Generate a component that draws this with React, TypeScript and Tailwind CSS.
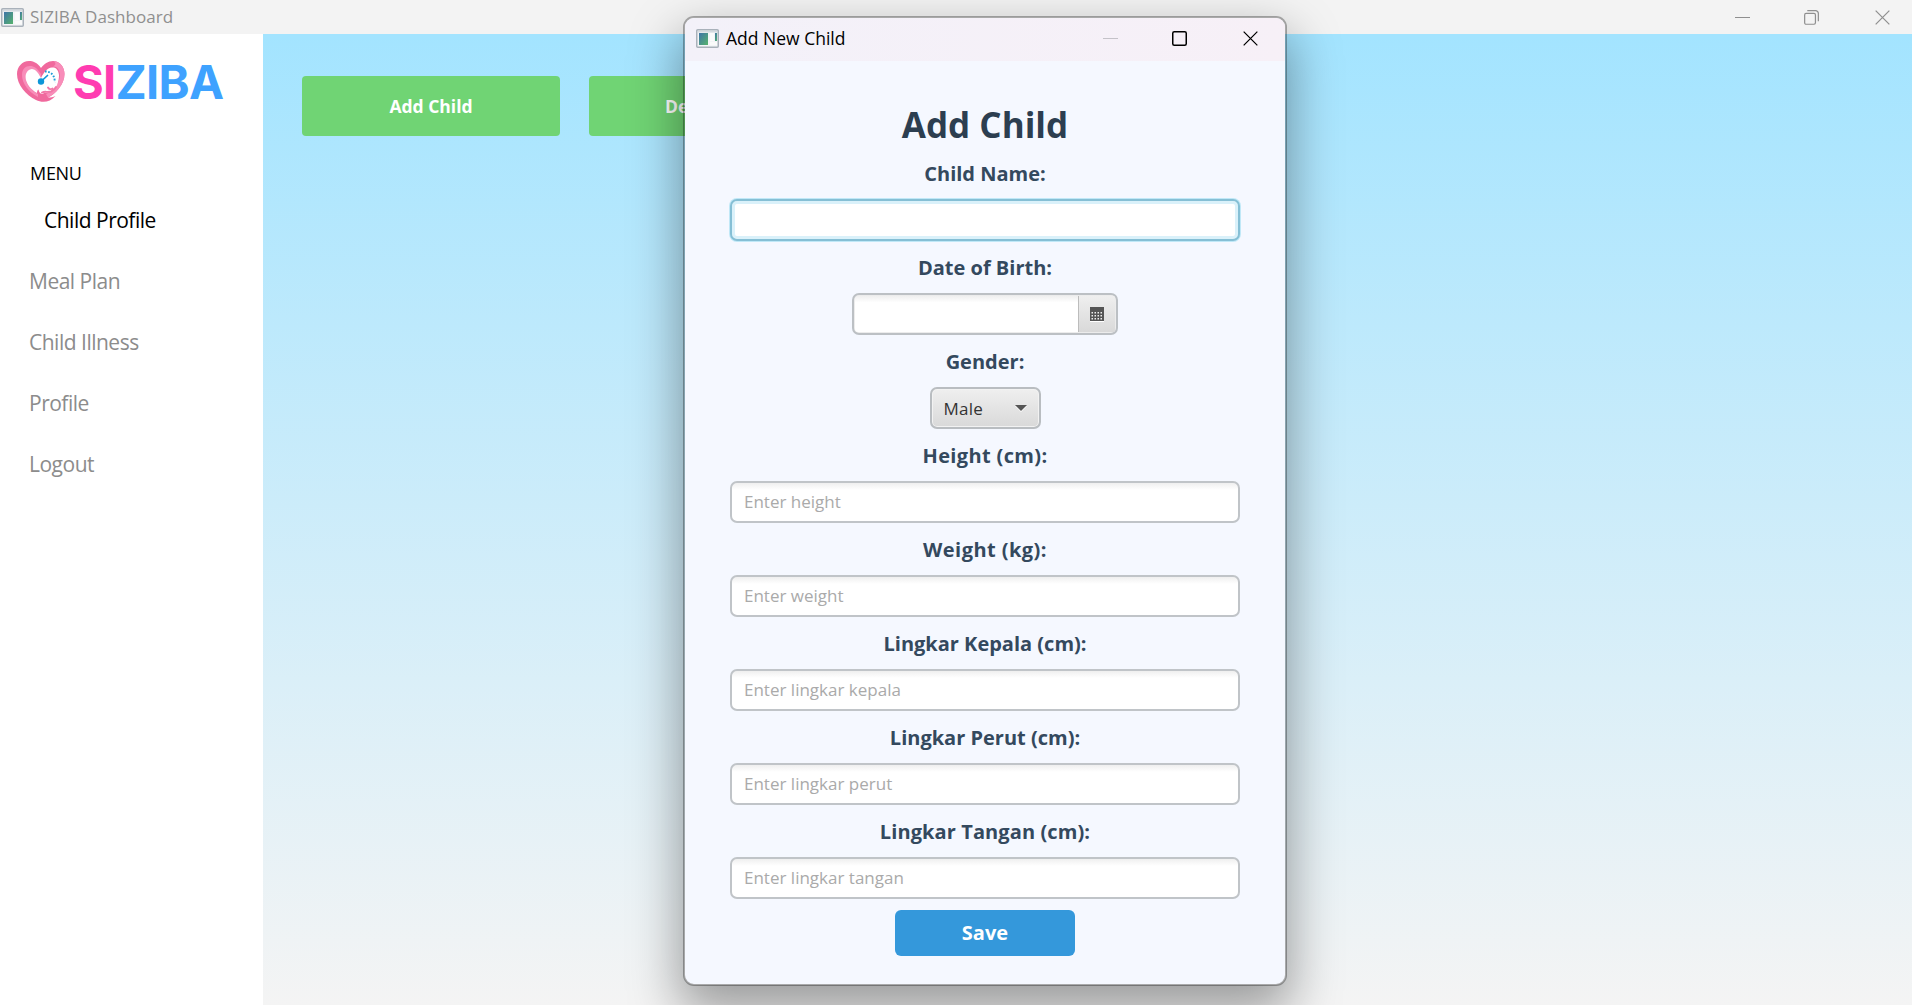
import React from "react";

const FONT = "font-['Open_Sans','Noto_Sans',sans-serif]";

function AppIcon({ className = "" }: { className?: string }) {
  return (
    <svg className={className} viewBox="0 0 23 19" fill="none">
      <defs>
        <linearGradient id="pane" x1="0" y1="0" x2="1" y2="1">
          <stop offset="0" stopColor="#3f74a8" />
          <stop offset="1" stopColor="#56b36c" />
        </linearGradient>
      </defs>
      <rect x="0.75" y="0.75" width="21.5" height="17.5" rx="1" fill="#f3f5f7" stroke="#a9b1ba" strokeWidth="1.5" />
      <rect x="2" y="2" width="19" height="1.5" fill="#d5dae0" />
      <rect x="3" y="4" width="9" height="12" fill="url(#pane)" />
      <rect x="14" y="4" width="4" height="8" fill="#fbfbfb" />
      <rect x="19" y="4" width="2" height="8" fill="url(#pane)" />
      <rect x="14" y="13" width="7" height="3" fill="#fafafa" />
    </svg>
  );
}

function HeartLogo() {
  return (
    <svg className="h-[42px] w-[48px]" viewBox="0 0 48 42" fill="none">
      <path
        d="M24 7 C20 1.500 16 0 12 0 C5 0 0 6 0 13 C0 24 9 34 19 39 C25 42 33 41.500 38.500 35 C36 36 34 36.500 31 36.500 C38 33 47.500 24 47.500 13 C47.500 6 43 0 36 0 C31 0 27 3 24 7 Z"
        fill="#f0699d"
      />
      <path
        d="M5 14 C5 8 8.500 5 13 5 C17 5 20 7 24 13 L24 17 C21 11 18 8 15 8 C11 8 8.500 12 8.500 16 C8.500 23 14 29 21 33 L21 36 C12 31 5 23 5 14 Z"
        fill="#f88db9"
      />
      <path d="M37 0.200 C43 0.500 47.500 6 47.500 13 C47.500 24 38 33 31 36.500 L29 33 C36 30 43 22 43 14 C42.500 8 40 5.500 36 5.500 C39 4 39 2 37 0.200 Z" fill="#f88db9" />
      <path
        d="M24 17 C21 11 18 8 15 8 C11 8 8.500 12 8.500 16 C8.500 22 14 29 20 32 C20 30 20.500 29 21.500 28.500 C22 31 23 32.500 25 33 C28 31 32 32 36 29.500 C40 26 42 20 42 14 C41.500 8.500 38.500 6 35 6.500 C30 7 27 11 24 17 Z"
        fill="#fff"
      />
      <path d="M25 31.500 C28 30 30 31.500 34 30.500 C36.500 29.500 38 28 39 26 M31 26.500 C32 28.500 34 28.500 35.500 27.500" stroke="#f177a7" strokeWidth="1.900" strokeLinecap="round" />
      <circle cx="24" cy="20.500" r="3.200" fill="#0d96d8" />
      <path d="M24 20.500 L30.500 14.500" stroke="#0d96d8" strokeWidth="1.700" strokeLinecap="round" />
      <path d="M28 10.500 A9 9 0 0 1 37.500 21" stroke="#1e9bd7" strokeWidth="1.900" strokeDasharray="1.700 1.500" />
    </svg>
  );
}

function MinimizeIcon({ className = "" }: { className?: string }) {
  return <div className={`h-px w-[15px] ${className}`} />;
}

function CloseIcon({ className = "" }: { className?: string }) {
  return (
    <svg className={className} viewBox="0 0 16 16" fill="none" stroke="currentColor">
      <path d="M0.700 0.700 L15.300 15.300 M15.300 0.700 L0.700 15.300" strokeWidth="1.300" />
    </svg>
  );
}

const label =
  "flex h-[52px] items-center justify-center pt-px text-[20px] font-bold text-[#34495e] whitespace-nowrap";

function TextField({ placeholder }: { placeholder: string }) {
  return (
    <div className="flex h-[42px] w-[510px] items-center rounded-[7px] border-2 border-[#c0c4c8] bg-linear-to-b from-[#efefef] via-white via-[18%] to-white px-3 text-[17px] text-[#aaaaaa]">
      {placeholder}
    </div>
  );
}

function CalendarIcon() {
  return (
    <svg className="h-[15px] w-[14px]" viewBox="0 0 14 15">
      <rect y="14" width="14" height="1" fill="#fff" />
      <rect width="14" height="14" fill="#555" />
      {[5, 8, 11].map((y) =>
        [1.5, 4.5, 7.5, 10.5].map((x) => <rect key={`${x}-${y}`} x={x} y={y} width="1.500" height="1.500" fill="#eee" />)
      )}
    </svg>
  );
}

const measures = [
  ["Height (cm):", "Enter height", "tracking-[0.35px]"],
  ["Weight (kg):", "Enter weight", "tracking-[0.45px]"],
  ["Lingkar Kepala (cm):", "Enter lingkar kepala", "tracking-normal"],
  ["Lingkar Perut (cm):", "Enter lingkar perut", "tracking-normal"],
  ["Lingkar Tangan (cm):", "Enter lingkar tangan", "tracking-[0.1px]"],
];

function Dialog() {
  return (
    <div className="absolute top-[16px] left-[683px] flex h-[970px] w-[604px] flex-col overflow-hidden rounded-[11px] border-2 border-black/30 bg-[#f5f8ff] bg-clip-padding shadow-[0_22px_50px_4px_rgba(0,0,0,0.36)]">
      <div className="flex h-[43px] shrink-0 items-center bg-linear-to-r from-[#f3f1f9] to-[#f7f0f7] pb-[2px] pl-[11px]">
        <AppIcon className="h-[19px] w-[23px]" />
        <span className="ml-[7px] text-[17.5px] text-black">Add New Child</span>
        <div className="ml-auto flex items-center pr-[27px]">
          <MinimizeIcon className="bg-[#c4c2c8]" />
          <svg className="ml-[54px] h-[15px] w-[15px]" viewBox="0 0 15 15" fill="none">
            <rect x="0.750" y="0.750" width="13.500" height="13.500" rx="1.500" stroke="#000" strokeWidth="1.500" />
          </svg>
          <CloseIcon className="ml-[56px] h-[15px] w-[15px] text-black" />
        </div>
      </div>
      <div className="flex flex-col items-center pt-[40px]">
        <h1 className="flex h-[46px] items-center pt-[2px] text-[35px] font-bold text-[#2c3e50]">Add Child</h1>
        <div className={label}>Child Name:</div>
        <div className="h-[42px] w-[510px] rounded-[7px] border-2 border-[#85bfd5] bg-white shadow-[0_0_0_1px_#c0e8f7,inset_0_0_0_3px_#daf1fa]" />
        <div className={label}>Date of Birth:</div>
        <div className="flex h-[42px] w-[266px] overflow-hidden rounded-[7px] border-2 border-[#bcc0c4] bg-[#ececec] p-px">
          <div className="flex-1 rounded-l-[3px] bg-linear-to-b from-[#efefef] via-white via-[18%] to-white" />
          <div className="flex w-[37px] items-center justify-center border-l border-[#bcbcbc] bg-linear-to-b from-[#efefef] to-[#d9d9d9] pr-px">
            <CalendarIcon />
          </div>
        </div>
        <div className={label}>Gender:</div>
        <div className="flex h-[42px] w-[111px] items-center justify-between rounded-[7px] border-2 border-[#b9bdc1] bg-linear-to-b from-[#efefef] to-[#d9d9d9] px-3 text-[17px] text-[#333] shadow-[inset_0_0_0_1px_#f2f2f2]">
          <span className="pt-px tracking-[0.2px]">Male</span>
          <svg className="h-[7px] w-[12px]" viewBox="0 0 12 7">
            <path d="M0 1 H12 L6 7 Z" fill="#fff" />
            <path d="M0 0 H12 L6 6 Z" fill="#555" />
          </svg>
        </div>
        {measures.map(([name, hint, tracking]) => (
          <React.Fragment key={name}>
            <div className={`${label} ${tracking}`}>{name}</div>
            <TextField placeholder={hint} />
          </React.Fragment>
        ))}
        <button className="mt-[11px] h-[46px] w-[180px] rounded-[6px] bg-[#3498db] text-[20px] font-bold text-white">Save</button>
      </div>
    </div>
  );
}

export default function App() {
  return (
    <div className={`relative flex h-[1005px] w-[1912px] flex-col overflow-hidden bg-white ${FONT}`}>
      <header className="flex h-[34px] shrink-0 items-center bg-[#f3f3f3] pl-px text-[#8f8f8f]">
        <AppIcon className="h-[19px] w-[23px]" />
        <span className="ml-[6px] text-[17px] tracking-[0.05px]">SIZIBA Dashboard</span>
        <div className="ml-auto flex items-center pr-[22px]">
          <MinimizeIcon className="bg-[#8f8f8f]" />
          <svg className="ml-[54px] h-[15px] w-[15px]" viewBox="0 0 16 16" fill="none" stroke="currentColor" strokeWidth="1.300">
            <rect x="0.700" y="3.700" width="11.500" height="11.500" rx="1.500" />
            <path d="M3.500 0.700 H12 A3 3 0 0 1 15.300 4 V12" />
          </svg>
          <CloseIcon className="ml-[56px] h-[15px] w-[15px]" />
        </div>
      </header>
      <div className="flex min-h-0 flex-1">
        <aside className="flex w-[263px] shrink-0 flex-col bg-white">
          <div className="flex h-[95px] items-center pl-[17px]">
            <HeartLogo />
            <div className="ml-[8px] pb-px font-[Inter,sans-serif] text-[47px] leading-none font-bold tracking-[-0.7px]">
              <span className="text-[#ff3cb1]">SI</span>
              <span className="text-[#3ea2ff]">ZIBA</span>
            </div>
          </div>
          <div className="mt-[28px] flex h-[33px] items-start pt-[3px] pl-[30px] text-[18px] tracking-[-0.3px] text-black">MENU</div>
          <nav className="flex flex-col text-[21px] tracking-[-0.5px] text-[#8c8c8c]">
            <a className="flex h-[61px] items-center pl-[44px] text-black">Child Profile</a>
            <a className="flex h-[61px] items-center pl-[29px]">Meal Plan</a>
            <a className="flex h-[61px] items-center pl-[29px]">Child Illness</a>
            <a className="flex h-[61px] items-center pl-[29px]">Profile</a>
            <a className="flex h-[61px] items-center pl-[29px]">Logout</a>
          </nav>
        </aside>
        <main className="flex flex-1 items-start gap-[29px] bg-linear-to-b from-[#a3e4ff] to-[#f4f4f4] pt-[42px] pl-[39px] text-[17.5px] font-bold text-white">
          <button className="h-[60px] w-[258px] rounded-[4px] bg-[#70d474]">Add Child</button>
          <button className="h-[60px] w-[258px] rounded-[4px] bg-[#70d474]">Delete Child</button>
        </main>
      </div>
      <Dialog />
    </div>
  );
}
